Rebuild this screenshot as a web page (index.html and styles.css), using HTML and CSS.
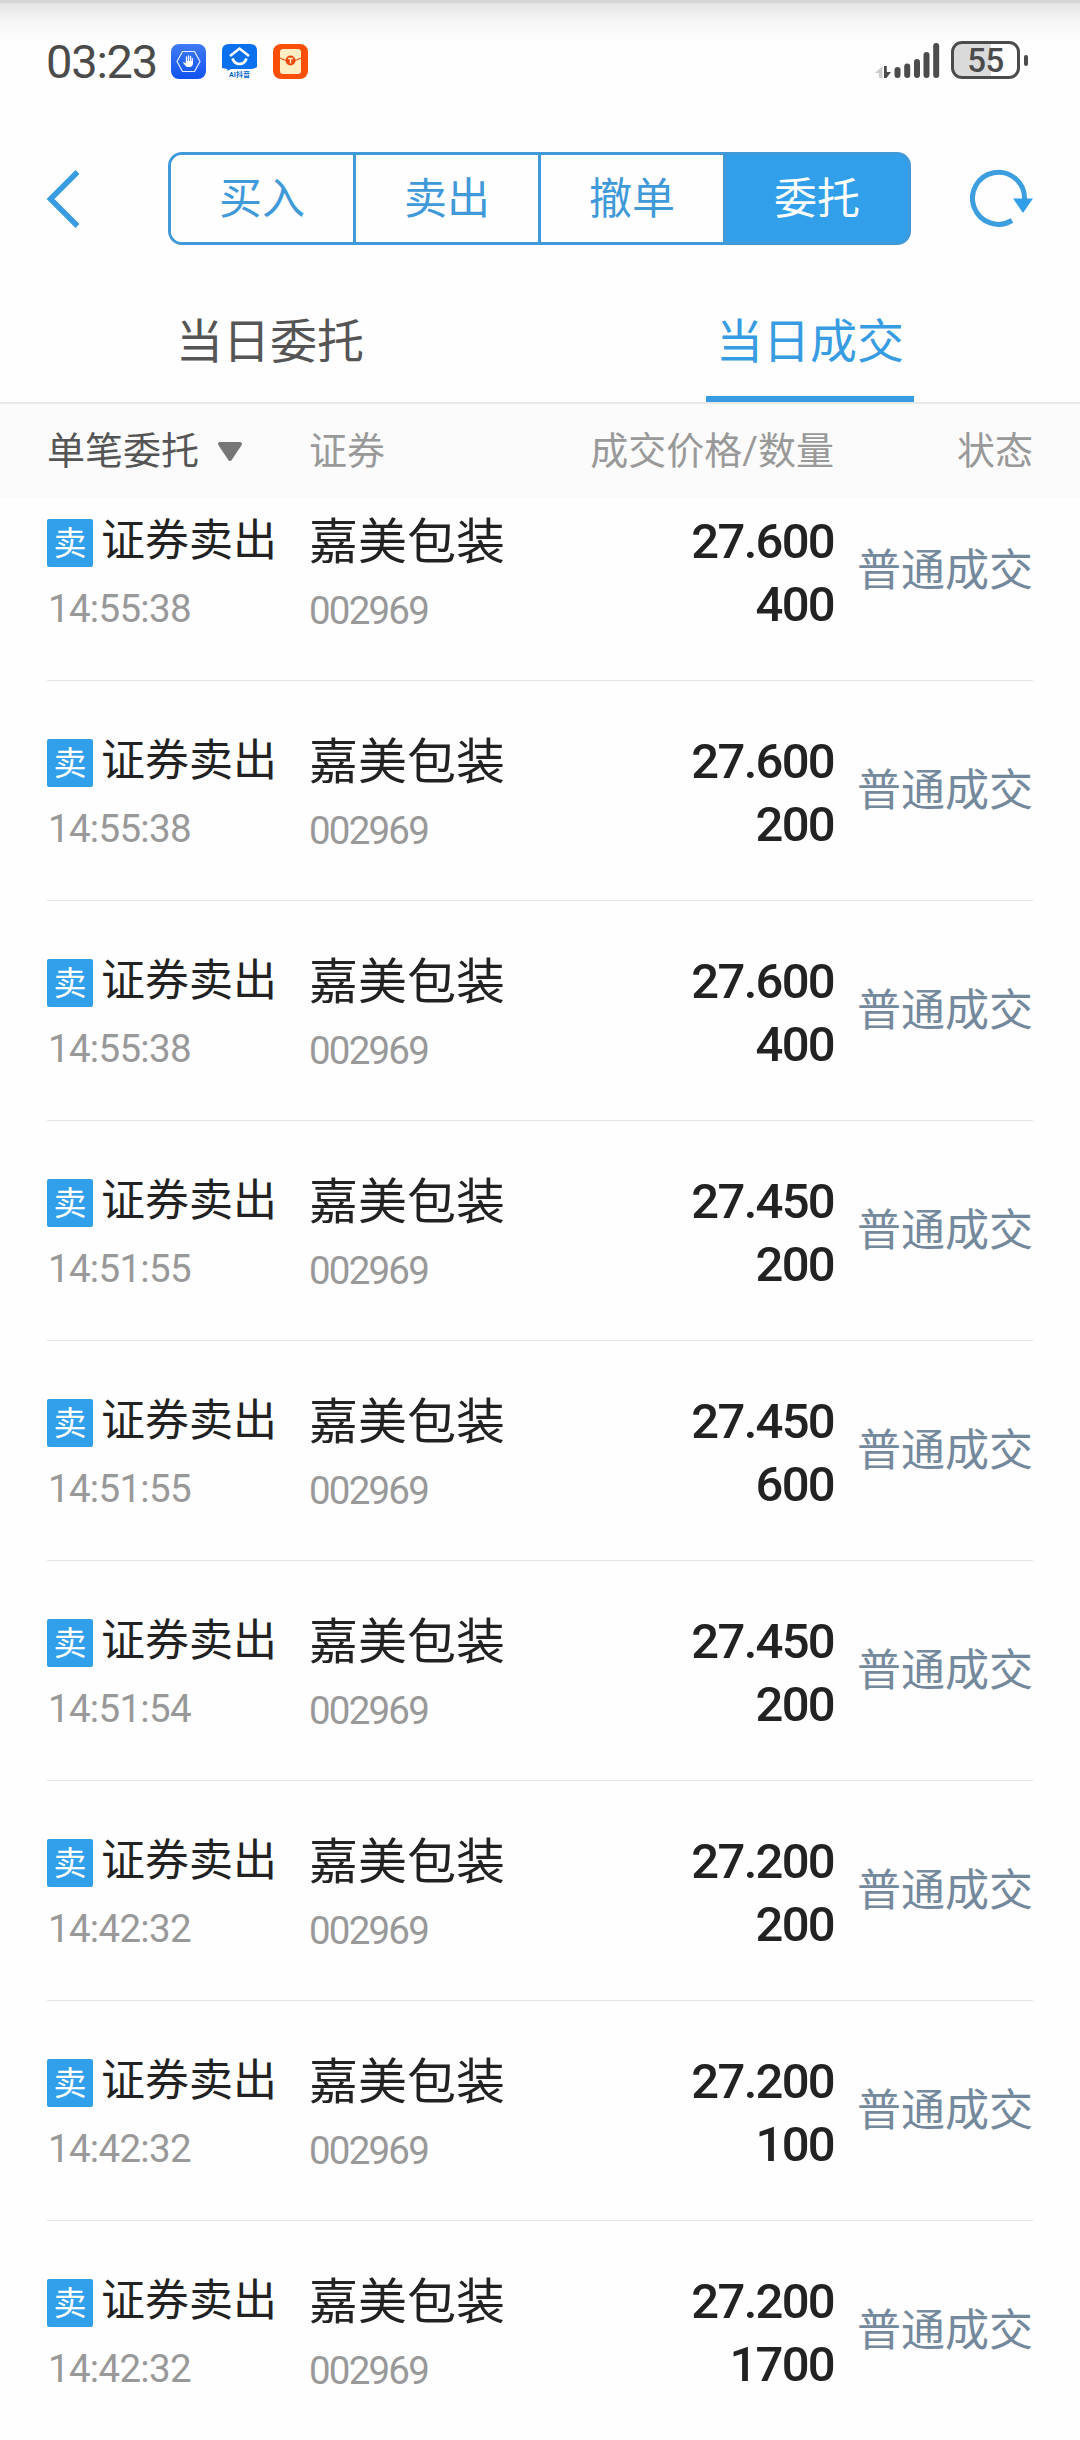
FILE: index.html
```html
<!DOCTYPE html>
<html lang="zh-CN">
  <head>
    <meta charset="UTF-8" />
    <meta name="viewport" content="width=device-width, initial-scale=1.0" />
    <title>当日成交</title>
    <link rel="stylesheet" href="styles.css">
  </head>
  <body>
    <div class="status-bar">
      <span class="clock">03:23</span>
      <div class="app-icons">
        <svg width="35" height="35" viewBox="0 0 35 35">
          <defs>
            <linearGradient id="blue" x1="0" y1="0" x2="0" y2="1">
              <stop offset="0" stop-color="#3f7bf6" />
              <stop offset="1" stop-color="#1152ee" />
            </linearGradient>
          </defs>
          <rect width="35" height="35" rx="8" fill="url(#blue)" />
          <path d="M11.500 7.500h12l5.500 10-5.500 10h-12L6 17.500z" fill="none" stroke="#e4edff" stroke-width="1.200" stroke-linejoin="round" />
          <path d="M15.500 18v-5M17.500 18v-6.200M19.500 18v-5.500M21.300 19v-4.500" stroke="#fff" stroke-width="1.300" stroke-linecap="round" />
          <path d="M14.900 17h7v3q-.5 3-3.200 3h-1.500q-2 0-3-1.500l-2.400-3q1-1 3.100.8z" fill="#fff" />
        </svg>
        <svg width="35" height="35" viewBox="0 0 35 35">
          <path d="M7 0h21q7 0 7 7v16q-2 2-9 2H9l-4 2 .5-2L0 24V7q0-7 7-7z" fill="#0a70ee" />
          <path d="M8 12l9.500-7.500L27 12" fill="none" stroke="#fff" stroke-width="2.500" />
          <path d="M10.500 14.500q2 5.500 7 5.500t7-5.500" fill="none" stroke="#fff" stroke-width="2.700" />
          <text class="app-label" x="7" y="33" textLength="21">AI抖音</text>
        </svg>
        <svg width="35" height="35" viewBox="0 0 35 35">
          <rect width="35" height="35" rx="8" fill="#fa4f09" />
          <rect x="7" y="5" width="21" height="25" rx="3" fill="#ffedc4" />
          <path d="M7 14q10.500 6 21 0" fill="none" stroke="#ef5a1c" stroke-width="1.200" />
          <circle cx="17.500" cy="16.500" r="5" fill="#ee4b0c" />
          <path d="M15 14.500h5M17.500 14.500v5" stroke="#ffedc4" stroke-width="1.400" />
        </svg>
      </div>
      <svg class="signal" width="66" height="38" viewBox="0 0 66 38">
        <path d="M7.500 37V25L0 32h4v5z" fill="#ccc" />
        <path d="M9 25v12h2.500l4.500-6h-4.200v-6z" fill="#4b4b4b" />
        <path d="M22.500 29v5M32.200 25.500v8.500M42 21v13M51.500 14v20M61.200 5v29" stroke="#4b4b4b" stroke-width="6" stroke-linecap="round" />
      </svg>
      <div class="battery"><span>55</span></div>
      <div class="battery-tip"></div>
    </div>

    <header class="nav">
      <svg class="back" width="34" height="60" viewBox="0 0 34 60">
        <path d="M31.500 3L4.500 30 31.500 57" fill="none" stroke="#379ce1" stroke-width="5.500" />
      </svg>
      <nav class="segments">
        <a class="segment">买入</a>
        <a class="segment">卖出</a>
        <a class="segment">撤单</a>
        <a class="segment active">委托</a>
      </nav>
      <svg class="refresh" width="64" height="60" viewBox="0 0 64 60">
        <path d="M54.500 31V29A26 26 0 1 0 42 51.500" fill="none" stroke="#3c9ddf" stroke-width="5" />
        <path d="M43 29.500h20L53 44z" fill="#319ee8" />
      </svg>
    </header>

    <div class="tabs">
      <div class="tab"><span>当日委托</span></div>
      <div class="tab active"><span>当日成交</span></div>
    </div>

    <div class="list-head">
      <div class="filter">
        单笔委托
        <svg width="26" height="20" viewBox="0 0 26 20">
          <path d="M3 2h20L13 17z" fill="#777" stroke="#777" stroke-width="4" stroke-linejoin="round" />
        </svg>
      </div>
      <div>证券</div>
      <div class="right">成交价格/数量</div>
      <div class="right">状态</div>
    </div>

    <ul id="deals" class="deals"></ul>

    <script>
      const deals = [
        ["14:55:38", "27.600", "400"],
        ["14:55:38", "27.600", "200"],
        ["14:55:38", "27.600", "400"],
        ["14:51:55", "27.450", "200"],
        ["14:51:55", "27.450", "600"],
        ["14:51:54", "27.450", "200"],
        ["14:42:32", "27.200", "200"],
        ["14:42:32", "27.200", "100"],
        ["14:42:32", "27.200", "1700"],
      ];

      document.getElementById("deals").innerHTML = deals
        .map(
          ([time, price, count]) => `
            <li class="deal">
              <div class="side">
                <div class="side-name"><i class="badge">卖</i>证券卖出</div>
                <div class="time">${time}</div>
              </div>
              <div class="stock">
                <div class="stock-name">嘉美包装</div>
                <div class="code">002969</div>
              </div>
              <div class="amount">
                <div>${price}</div>
                <div>${count}</div>
              </div>
              <div class="state">普通成交</div>
            </li>`
        )
        .join("");
    </script>
  </body>
</html>
```
FILE: styles.css
```css
:root {
  --blue: #319fe9;
  --blue-line: #4099d8;
  --text: #222;
  --text-dark: #555;
  --text-muted: #999;
  --bg: #fefefe;
}

* {
  margin: 0;
  padding: 0;
  box-sizing: border-box;
}

html,
body {
  height: 2440px;
  overflow: hidden;
}

body {
  width: 1080px;
  background: var(--bg);
  color: var(--text);
  font-family: Roboto, "Noto Sans CJK SC", sans-serif;
}

svg {
  display: block;
  flex: none;
}

.status-bar {
  display: flex;
  height: 130px;
  padding: 41px 52px 0 46px;
  background: linear-gradient(#d6d6d6 3px, #e4e4e4 3px, #f5f5f5 20px, var(--bg) 42px);
}

.clock {
  width: 125px;
  height: 41px;
  color: #4b4b4b;
  font-size: 47px;
  line-height: 41px;
  letter-spacing: -1.2px;
}

.app-icons {
  display: flex;
  gap: 16px;
  padding-top: 3px;
}

.app-label {
  fill: #0a65c8;
  font-size: 7px;
  font-weight: 700;
}

.signal {
  margin-left: auto;
}

.battery {
  display: flex;
  justify-content: center;
  align-items: center;
  width: 69px;
  height: 38px;
  margin-left: 10px;
  border: 3px solid #4b4b4b;
  border-radius: 11px;
  background: linear-gradient(90deg, #dadada 58%, var(--bg) 58%);
  color: #4b4b4b;
  font-size: 33px;
  font-weight: 500;
  letter-spacing: -0.5px;
}

.battery-tip {
  width: 4px;
  height: 11px;
  margin: 14px 0 0 4px;
  border-radius: 2px;
  background: #4b4b4b;
}

.nav {
  display: flex;
  align-items: center;
  height: 138px;
  padding: 0 46px;
}

.segments {
  display: flex;
  width: 743px;
  height: 93px;
  margin: -1px auto 0 88px;
  border: 3px solid var(--blue-line);
  border-radius: 14px;
  overflow: hidden;
  background: linear-gradient(90deg, transparent 80%, var(--blue) 80%) border-box;
}

.segment {
  width: 185px;
  border-right: 3px solid var(--blue-line);
  background: var(--bg);
  color: var(--blue-line);
  font-size: 43px;
  line-height: 88px;
  text-align: center;
}

.segment.active {
  flex: 1;
  border: 0;
  background: var(--blue);
  color: #fff;
}

.tabs {
  display: flex;
  height: 136px;
  border-bottom: 2px solid #e9e9e9;
}

.tab {
  display: flex;
  flex: 1;
  justify-content: center;
  color: var(--text-dark);
  font-size: 47px;
  line-height: 147px;
}

.tab.active span {
  height: 134px;
  padding: 0 10px;
  border-bottom: 6px solid #379ce1;
  color: #379ce1;
}

.list-head,
.deal {
  display: grid;
  grid-template-columns: 262px 240px 285px 1fr;
}

.list-head {
  height: 94px;
  padding: 0 47px;
  background: #fbfbfb;
  color: var(--text-muted);
  font-size: 38px;
  line-height: 95px;
}

.filter {
  display: flex;
  align-items: center;
  gap: 18px;
  color: var(--text-dark);
}

.right {
  text-align: right;
}

.deals {
  list-style: none;
}

.deal {
  height: 220px;
  margin: 0 47px;
  padding-top: 53px;
  border-bottom: 1px solid #e6e6e6;
}

/* the list is scrolled a little under the table head */
.deal:first-child {
  height: 183px;
  padding-top: 16px;
}

.side-name {
  display: flex;
  font-size: 44px;
  line-height: 54px;
}

.badge {
  width: 46px;
  height: 48px;
  margin: 5px 8px 0 0;
  border-radius: 2px;
  background: var(--blue);
  color: #fff;
  font-size: 33px;
  font-style: normal;
  line-height: 50px;
  text-align: center;
}

.stock-name {
  font-size: 49px;
  line-height: 58px;
}

.time,
.code {
  color: var(--text-muted);
  font-size: 38.500px;
  line-height: 46px;
}

.time {
  margin-top: 18px;
  padding-left: 1px;
  letter-spacing: -0.7px;
}

.code {
  margin-top: 16px;
  letter-spacing: -1.8px;
}

.amount {
  margin-top: -4px;
  font-size: 49px;
  font-weight: 500;
  line-height: 63px;
  letter-spacing: -1.7px;
  text-align: right;
}

.state {
  margin-top: 27px;
  color: #75899d;
  font-size: 44px;
  line-height: 60px;
  text-align: right;
  white-space: nowrap;
}
```
